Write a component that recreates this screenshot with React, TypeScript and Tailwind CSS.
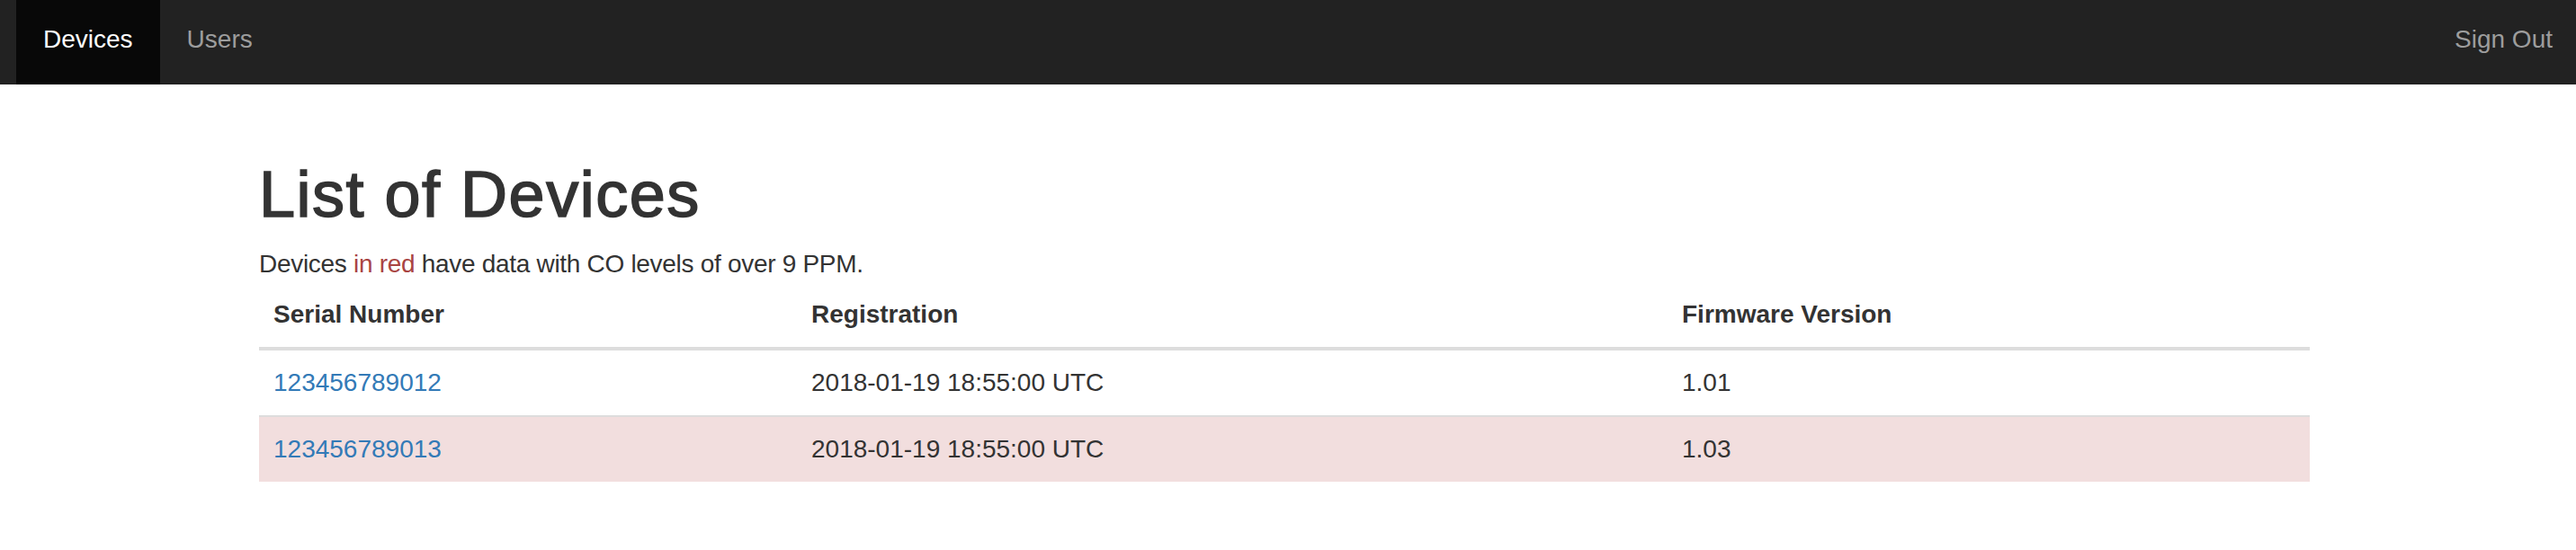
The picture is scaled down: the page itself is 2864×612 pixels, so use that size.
const devices = [
  { serial: "123456789012", registered: "2018-01-19 18:55:00 UTC", firmware: "1.01", danger: false },
  { serial: "123456789013", registered: "2018-01-19 18:55:00 UTC", firmware: "1.03", danger: true },
];

function NavBar() {
  return (
    <nav className="flex h-[94px] items-start justify-between bg-[#222222] text-[28px] leading-[40px]">
      <ul className="ml-[18px] flex">
        <li>
          <a className="block h-[94px] bg-[#080808] px-[30px] pt-[24px] text-white" href="#">
            Devices
          </a>
        </li>
        <li>
          <a className="block h-[94px] px-[30px] pt-[24px] text-[#9d9d9d]" href="#">
            Users
          </a>
        </li>
      </ul>
      <a className="block h-[94px] pl-[30px] pr-[26px] pt-[24px] text-[#9d9d9d]" href="#">
        Sign Out
      </a>
    </nav>
  );
}

export default function App() {
  return (
    <div className="min-h-screen bg-white font-['Liberation_Sans',Arial,sans-serif] text-[#333333]">
      <NavBar />

      <div className="ml-[288px] w-[2280px] pt-[82px]">
        <h1 className="text-[72px] font-medium leading-[80px] tracking-[1.5px] [-webkit-text-stroke:1.6px_#333333]">
          List of Devices
        </h1>
        <p className="mt-[18px] text-[28px] leading-[40px] tracking-[-0.3px]">
          Devices <span className="text-[#a94442]">in red</span> have data with CO levels of over 9 PPM.
        </p>

        <table className="w-full border-collapse text-[28px] leading-[40px]">
          <colgroup>
            <col className="w-[598px]" />
            <col className="w-[968px]" />
            <col className="w-[714px]" />
          </colgroup>
          <thead>
            <tr className="border-b-4 border-[#dddddd] text-left">
              <th className="px-4 py-4 font-bold">Serial Number</th>
              <th className="px-4 py-4 font-bold">Registration</th>
              <th className="px-4 py-4 font-bold">Firmware Version</th>
            </tr>
          </thead>
          <tbody>
            {devices.map((d, i) => (
              <tr
                key={d.serial}
                className={`${i > 0 ? "border-t-2 border-[#dddddd]" : ""} ${d.danger ? "bg-[#f2dede]" : ""}`}
              >
                <td className="px-4 py-4">
                  <a className="text-[#337ab7]" href="#">
                    {d.serial}
                  </a>
                </td>
                <td className="px-4 py-4">{d.registered}</td>
                <td className="px-4 py-4">{d.firmware}</td>
              </tr>
            ))}
          </tbody>
        </table>
      </div>
    </div>
  );
}
